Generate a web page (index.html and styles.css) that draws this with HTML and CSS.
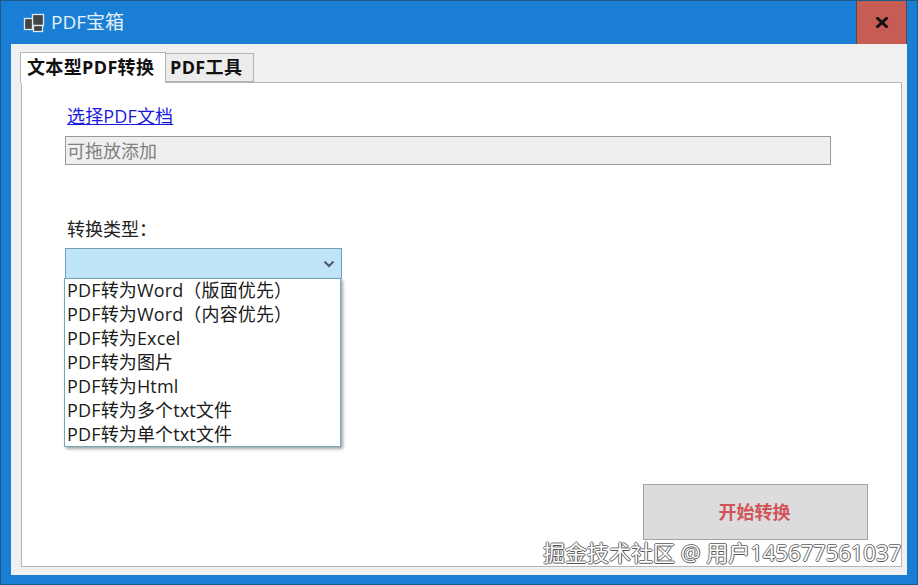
FILE: index.html
```html
<!DOCTYPE html>
<html lang="zh-CN">
<head>
<meta charset="utf-8">
<title>PDF宝箱</title>
<link rel="stylesheet" href="styles.css">
</head>
<body>
<div class="window">
  <header class="titlebar">
    <svg class="app-icon" width="22" height="22" viewBox="0 0 22 22">
      <rect x="9.500" y="2.500" width="11" height="11" fill="#444" stroke="#dfe9f2" stroke-width="1.300"/>
      <rect x="1.500" y="6.500" width="8" height="11" fill="#444" stroke="#dfe9f2" stroke-width="1.300"/>
      <rect x="10.500" y="13.500" width="9" height="6" fill="#444" stroke="#dfe9f2" stroke-width="1.300"/>
    </svg>
    <span class="title">PDF宝箱</span>
    <button class="close" type="button">
      <svg width="14" height="11" viewBox="0 0 14 11"><path d="M1.5 .5 12.500 10.500M12.500 .5 1.500 10.500" stroke="#111" stroke-width="3" fill="none"/></svg>
    </button>
  </header>
  <main class="client">
    <nav class="tabs">
      <div class="tab active">文本型PDF转换</div>
      <div class="tab">PDF工具</div>
    </nav>
    <section class="page">
      <a class="link" href="#">选择PDF文档</a>
      <div class="dropzone">可拖放添加</div>
      <div class="type-label">转换类型：</div>
      <div class="select">
        <svg width="12" height="8" viewBox="0 0 12 8"><path d="M1.5 1.5 6 6l4.500-4.500" stroke="#4a5a66" stroke-width="2" fill="none"/></svg>
        <ul class="menu">
          <li>PDF转为Word（版面优先）</li>
          <li>PDF转为Word（内容优先）</li>
          <li>PDF转为Excel</li>
          <li>PDF转为图片</li>
          <li>PDF转为Html</li>
          <li>PDF转为多个txt文件</li>
          <li>PDF转为单个txt文件</li>
        </ul>
      </div>
      <div class="actions"><button class="start" type="button">开始转换</button></div>
    </section>
  </main>
  <div class="watermark">掘金技术社区 @ 用户145677561037</div>
</div>
</body>
</html>
```
FILE: styles.css
```css
* { box-sizing: border-box; }
html, body { margin: 0; padding: 0; }
body {
  width: 918px;
  height: 585px;
  overflow: hidden;
  font-family: "Open Sans", "Noto Sans CJK SC", sans-serif;
  font-size: 18px;
  color: #1a1a1a;
}
.window {
  position: relative;
  width: 918px;
  height: 585px;
  background: #1a7fd4;
  border: 1px solid #1c5a8c;
  display: flex;
  flex-direction: column;
}
.titlebar {
  height: 43px;
  display: flex;
  align-items: center;
  padding-left: 22px;
  flex: none;
}
.app-icon { flex: none; }
.title {
  margin-left: 6px;
  margin-top: -2px;
  color: #e6f0f9;
  font-size: 19px;
  line-height: 24px;
}
.close {
  margin-left: auto;
  margin-right: 10px;
  width: 51px;
  height: 44px;
  align-self: flex-start;
  background: #c75c54;
  border: 1px solid #5a4a4a;
  border-top: 0;
  padding: 0;
  display: flex;
  align-items: center;
  justify-content: center;
}
.client {
  flex: none;
  width: 896px;
  height: 531px;
  margin-left: 10px;
  background: #f0f0f0;
  padding: 8px 5px 8px 10px;
  display: flex;
  flex-direction: column;
}
.tabs {
  display: flex;
  align-items: flex-end;
  height: 30px;
  flex: none;
  position: relative;
  z-index: 1;
}
.tab {
  font-weight: 700;
  font-size: 18px;
  letter-spacing: .35px;
  line-height: 26px;
  height: 29px;
  width: 88px;
  padding: 0 0 0 4px;
  background: #ececec;
  border: 1px solid #b5b5b5;
  border-left: 0;
  border-bottom: 1px solid #b5b5b5;
  color: #111;
}
.tab.active {
  height: 31px;
  width: 146px;
  margin-left: -1px;
  padding: 1px 0 0 6px;
  margin-bottom: -1px;
  background: #fff;
  border: 1px solid #b5b5b5;
  border-bottom: 0;
}
.page {
  flex: 1;
  background: #fff;
  border: 1px solid #b5b5b5;
  padding: 20px 0 0 45px;
  display: flex;
  flex-direction: column;
  align-items: flex-start;
}
.link {
  color: #1a1ae0;
  text-decoration: underline;
  font-size: 18px;
  line-height: 26px;
  letter-spacing: .15px;
}
.dropzone {
  margin-top: 7px;
  margin-left: -2px;
  width: 766px;
  height: 29px;
  background: #efefef;
  border: 1px solid #9a9a9a;
  padding-left: 1px;
  line-height: 29px;
  color: #808080;
}
.type-label {
  margin-top: 51px;
  line-height: 26px;
  color: #222;
}
.select {
  position: relative;
  margin-top: 6px;
  margin-left: -2px;
  width: 277px;
  height: 31px;
  background: #bfe3f7;
  border: 1px solid #6f9fbb;
  display: flex;
  align-items: center;
  justify-content: flex-end;
  padding-right: 6px;
}
.menu {
  position: absolute;
  left: -2px;
  top: 29px;
  width: 277px;
  height: 169px;
  margin: 0;
  padding: 0 0 0 2px;
  list-style: none;
  background: #fff;
  border: 1px solid #6fa9bd;
  box-shadow: 2px 2px 3px rgba(90, 90, 90, .55);
  z-index: 2;
}
.menu li {
  height: 24px;
  line-height: 22px;
  letter-spacing: .15px;
  white-space: nowrap;
  color: #1a1a1a;
}
.actions {
  margin-top: auto;
  align-self: flex-end;
  margin-right: 33px;
  margin-bottom: 26px;
}
.start {
  display: block;
  width: 225px;
  height: 56px;
  background: #dcdcdc;
  border: 1px solid #a3a3a3;
  color: #d0555a;
  font-family: inherit;
  font-size: 18px;
  font-weight: 700;
  padding: 0 2px 2px 0;
}
.watermark {
  position: absolute;
  left: 542px;
  top: 536px;
  font-size: 22px;
  line-height: 30px;
  white-space: nowrap;
  color: #fff;
  text-shadow: 1px 0 #555, -1px 0 #777, 0 1px #555, 0 -1px #777;
}
```
